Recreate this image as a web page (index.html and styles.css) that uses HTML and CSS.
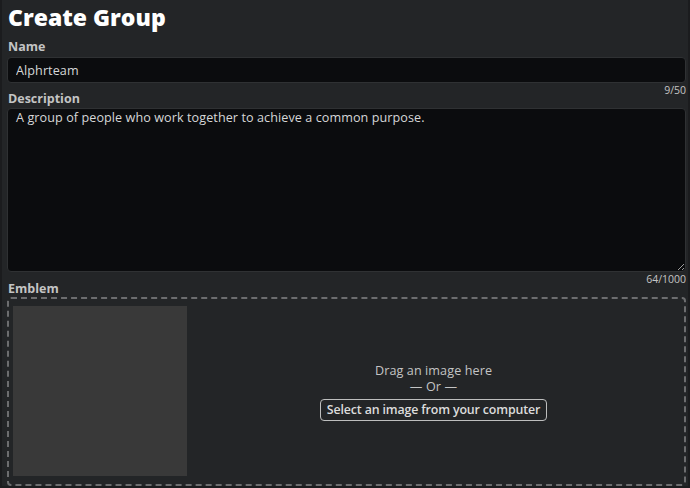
FILE: index.html
```html
<!DOCTYPE html>
<html lang="en">
<head>
    <meta charset="UTF-8">
    <meta name="viewport" content="width=device-width, initial-scale=1.0">
    <title>Create Group</title>
    <link rel="stylesheet" href="styles.css">
</head>
<body>
    <div class="page">
        <h1>Create Group</h1>

        <div class="field">
            <label class="label" for="name">Name</label>
            <input class="input" id="name" type="text" value="Alphrteam">
            <div class="counter">9/50</div>
        </div>

        <div class="field">
            <label class="label" for="desc">Description</label>
            <textarea class="input textarea" id="desc">A group of people who work together to achieve a common purpose.</textarea>
            <div class="counter">64/1000</div>
        </div>

        <div class="field">
            <div class="label">Emblem</div>
            <div class="dropzone">
                <div class="preview"></div>
                <div class="drop-text">
                    <div>Drag an image here</div>
                    <div>&mdash; Or &mdash;</div>
                    <button class="select-btn">Select an image from your computer</button>
                </div>
            </div>
        </div>
    </div>
</body>
</html>
```

FILE: styles.css
```css
html, body {
    margin: 0;
    padding: 0;
    background-color: #1b1c1e;
}
body {
    font-family: 'Open Sans', 'Noto Sans', sans-serif;
    color: #bdbebe;
}
.page {
    width: 686px;
    height: 486px;
    margin: 0 2px;
    background-color: #232527;
    padding: 0 2px 0 5px;
    box-sizing: border-box;
    overflow: hidden;
}
h1 {
    margin: 0;
    padding: 3px 0 0 1px;
    font-size: 23px;
    font-weight: 800;
    color: #fff;
    line-height: 28px;
}
.field {
    display: flex;
    flex-direction: column;
}
.label {
    font-size: 12.5px;
    font-weight: 700;
    color: #c3c4c4;
    line-height: 12px;
    margin: 10px 0 4px;
    padding-left: 1px;
}
.field + .field .label {
    margin-top: -2px;
    margin-bottom: 3px;
}
.input {
    box-sizing: border-box;
    width: 100%;
    height: 26px;
    background-color: #0b0c0e;
    border: 1px solid #2f3133;
    border-radius: 4px;
    color: #d6d7d8;
    font-family: inherit;
    font-size: 12.6px;
    letter-spacing: 0.08px;
    padding: 2px 8px;
    outline: none;
}
.textarea {
    height: 164px;
    resize: vertical;
    padding: 2px 8px;
    line-height: 14px;
}
.counter {
    text-align: right;
    font-size: 10.5px;
    color: #c3c4c4;
    line-height: 10px;
    margin-top: 2px;
}
.dropzone {
    display: flex;
    height: 189px;
    box-sizing: border-box;
    border: 2px dashed #6c6d6f;
    border-radius: 4px;
    padding: 7px 4px;
}
.field + .field + .field .label {
    margin-top: -1px;
    margin-bottom: 2px;
}
.preview {
    width: 174px;
    height: 170px;
    background-color: #393939;
}
.drop-text {
    flex: 1;
    display: flex;
    flex-direction: column;
    align-items: center;
    justify-content: center;
    font-size: 12.6px;
    letter-spacing: 0.1px;
    line-height: 16px;
    color: #c3c4c4;
}
.select-btn {
    margin-top: 4px;
    height: 22px;
    background-color: transparent;
    border: 1px solid #bdbebe;
    border-radius: 4px;
    color: #dcdcdc;
    font-family: inherit;
    font-size: 12.4px;
    font-weight: 600;
    letter-spacing: -0.15px;
    padding: 0 6px;
    cursor: pointer;
}
```
